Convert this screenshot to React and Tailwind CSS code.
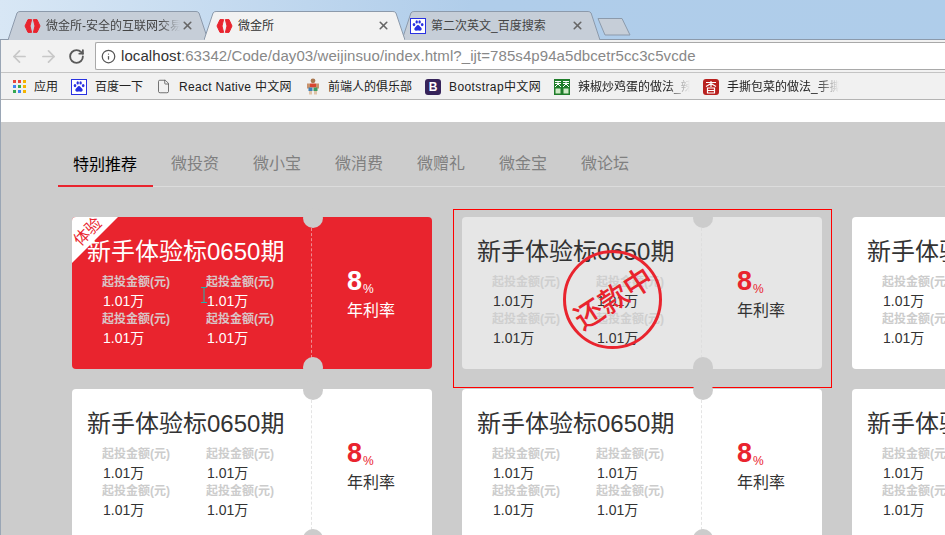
import React from "react";
import { ArrowLeft, ArrowRight, RotateCw, Info, File, X } from "lucide-react";

const FONT = "font-['Liberation_Sans','Noto_Sans_CJK_SC',sans-serif]";

const LogoIcon = () => (
  <svg width="17" height="16" viewBox="0 0 17 16" className="shrink-0">
    <path d="M7.6 1.6 L4 1.6 L1 8 L4 14.4 L7.6 14.4 L6 8 Z" fill="#e9242e" stroke="#e9242e" strokeLinejoin="round" />
    <path d="M9.4 1.6 L13 1.6 L16 8 L13 14.4 L9.4 14.4 L11 8 Z" fill="#e9242e" stroke="#e9242e" strokeLinejoin="round" />
  </svg>
);

const BaiduIcon = () => (
  <svg width="16" height="16" viewBox="0 0 16 16" className="shrink-0">
    <rect x="0.5" y="0.5" width="15" height="15" fill="#fff" stroke="#2932e1" />
    <g fill="#2932e1">
      <ellipse cx="4" cy="6.6" rx="1.3" ry="1.7" />
      <ellipse cx="6.7" cy="3.9" rx="1.2" ry="1.6" />
      <ellipse cx="9.6" cy="3.9" rx="1.2" ry="1.6" />
      <ellipse cx="12.2" cy="6.6" rx="1.3" ry="1.7" />
      <path d="M8 7 C6.6 7 6.2 8.6 5 9.6 C3.6 10.8 4.4 13 6.2 12.7 C7.2 12.5 8.8 12.5 9.8 12.7 C11.6 13 12.4 10.8 11 9.6 C9.8 8.6 9.4 7 8 7 Z" />
    </g>
  </svg>
);

const AppsIcon = () => {
  const colors = ["#e8453c", "#e8453c", "#f4b400", "#3f83f4", "#34a853", "#f4b400", "#34a853", "#3f83f4", "#f4b400"];
  return (
    <div className="grid grid-cols-[3px_3px_3px] gap-[2px] shrink-0">
      {colors.map((c, i) => (
        <svg key={i} width="3" height="3" className="block">
          <rect width="3" height="3" fill={c} />
        </svg>
      ))}
    </div>
  );
};

const PersonIcon = () => (
  <svg width="14" height="17" viewBox="0 0 14 17" className="shrink-0">
    <circle cx="7" cy="2.8" r="2.4" fill="#a9774f" />
    <rect x="4" y="5.5" width="6" height="4" fill="#d8452f" />
    <rect x="1" y="5.5" width="3" height="5" fill="#c9926c" />
    <rect x="10" y="5.5" width="3" height="5" fill="#c9926c" />
    <rect x="2.5" y="9.5" width="4" height="3.5" fill="#3f7fb5" />
    <rect x="7.5" y="9.5" width="4" height="3.5" fill="#3f9a5f" />
    <rect x="3" y="13" width="3" height="3.5" fill="#e0c3a8" />
    <rect x="8" y="13" width="3" height="3.5" fill="#e0c3a8" />
  </svg>
);

const BootstrapIcon = () => (
  <div className="w-4 h-4 rounded-[3px] bg-[#36235a] text-white text-[12px] font-bold leading-4 text-center shrink-0">B</div>
);

const GreenIcon = () => (
  <svg width="16" height="16" viewBox="0 0 16 16" className="shrink-0">
    <rect width="16" height="16" fill="#1f7d2a" />
    <path d="M1 2.5H7M1 4.5H7M4 2.5V5M1 8L4 5L7 8M9 2.5H15M9 4.5H15M12 2.5V5M9 8L12 5L15 8" stroke="#fff" strokeWidth="1" fill="none" />
    <rect x="1.5" y="9.5" width="5" height="5" fill="#cfeac6" />
    <rect x="9.5" y="9.5" width="5" height="5" fill="#cfeac6" />
  </svg>
);

const XiangIcon = () => (
  <svg width="16" height="16" viewBox="0 0 16 16" className="shrink-0">
    <rect width="16" height="16" rx="3" fill="#b8211f" />
    <path d="M3 3.5H13M8 2V8M3 7.5L8 4.5L13 7.5M4.5 9H11.5V14H4.5ZM4.5 11.5H11.5" stroke="#fff" strokeWidth="1.2" fill="none" />
  </svg>
);

const Tab = ({ width, active, icon, title, fade, className, inner }) => (
  <div className={`relative h-[29px] flex items-center ${width} ${active ? "z-10" : ""} ${className || ""}`}>
    <svg className="absolute inset-0 w-full h-full" viewBox="0 0 200 29" preserveAspectRatio="none">
      <path
        d="M0 29 L9 2 Q10 0.5 12 0.5 L188 0.5 Q190 0.5 191 2 L200 29"
        fill={active ? "#f2f2f2" : "#c6ced8"}
        stroke="#8c9aab"
        strokeWidth="1"
        vectorEffect="non-scaling-stroke"
      />
    </svg>
    <div className={`relative flex items-center w-full ${inner}`}>
      {icon}
      <span
        className={`ml-[5px] text-[12px] whitespace-nowrap overflow-hidden w-[134px] ${active ? "text-[#333]" : "text-[#444]"} ${
          fade ? "[mask-image:linear-gradient(to_right,#000_85%,transparent)]" : ""
        }`}
      >
        {title}
      </span>
      <X size={13} strokeWidth={3} className="ml-auto text-[#666] shrink-0" />
    </div>
  </div>
);

const Bookmark = ({ icon, text, width, fade, track }) => (
  <div className="flex items-center gap-[8px] shrink-0">
    {icon}
    <span
      className={`text-[12px] text-[#222] whitespace-nowrap overflow-hidden ${width} ${track || ""} ${
        fade ? "[mask-image:linear-gradient(to_right,#000_80%,transparent)]" : ""
      }`}
    >
      {text}
    </span>
  </div>
);

const Browser = () => (
  <div>
    <div className="h-[40px] bg-gradient-to-r from-[#d8e7f5] via-[#b0cdea] to-[#afcdea] pt-[11px] pl-[8px] flex border-b border-[#8c9aab]">
      <Tab width="w-[200px]" inner="pl-[16px] pr-[14px]" icon={<LogoIcon />} title="微金所-安全的互联网交易平台" fade />
      <Tab width="w-[201px]" inner="pl-[12px] pr-[15px]" active icon={<LogoIcon />} title="微金所" className="-ml-[4px]" />
      <Tab width="w-[198px]" inner="pl-[8px] pr-[16px]" icon={<BaiduIcon />} title="第二次英文_百度搜索" className="-ml-[3px]" />
      <svg width="34" height="18" viewBox="0 0 34 18" className="-ml-[3px] mt-[7px]">
        <path d="M1 0.5 L25 0.5 L33 17 L8 17 Z" fill="#c6ced8" stroke="#8c9aab" />
      </svg>
    </div>
    <div className="border-l border-[#9aa6b5]">
      <div className="h-[32px] bg-[#f2f2f2] flex items-center pl-[9px]">
        <ArrowLeft size={19} strokeWidth={2.2} className="text-[#c8c8c8]" />
        <ArrowRight size={19} strokeWidth={2.2} className="text-[#c8c8c8] ml-[10px]" />
        <RotateCw size={17} strokeWidth={2.6} className="text-[#5a5a5a] ml-[10px]" />
        <div className="ml-[10px] h-[28px] flex-1 bg-white border border-r-0 border-[#a9a9a9] rounded-l-[2px] flex items-center pl-[5px]">
          <Info size={15} strokeWidth={2} className="text-[#555]" />
          <span className="ml-[5px] text-[15px] tracking-[0.08px] whitespace-nowrap text-[#333]">
            localhost<span className="text-[#888]">:63342/Code/day03/weijinsuo/index.html?_ijt=785s4p94a5dbcetr5cc3c5vcde</span>
          </span>
        </div>
      </div>
      <div className="h-[28px] bg-[#f1f1f1] border-t border-[#c4c4c4] border-b border-b-[#b4b4b4] flex items-center pl-[12px] pt-[1px] gap-[13px] overflow-hidden">
        <Bookmark icon={<AppsIcon />} text="应用" width="w-[24px]" />
        <Bookmark icon={<BaiduIcon />} text="百度一下" width="w-[48px]" />
        <Bookmark icon={<File size={15} strokeWidth={1.3} className="text-[#555] shrink-0" />} text="React Native 中文网" width="w-[114px]" track="tracking-[0.3px]" />
        <Bookmark icon={<PersonIcon />} text="前端人的俱乐部" width="w-[84px]" />
        <Bookmark icon={<BootstrapIcon />} text="Bootstrap中文网" width="w-[92px]" track="tracking-[0.4px]" />
        <Bookmark icon={<GreenIcon />} text="辣椒炒鸡蛋的做法_辣椒炒" width="w-[112px]" fade />
        <Bookmark icon={<XiangIcon />} text="手撕包菜的做法_手撕包菜" width="w-[112px]" fade />
      </div>
      <div className="h-[22px] bg-white" />
    </div>
  </div>
);

const navs = ["微投资", "微小宝", "微消费", "微赠礼", "微金宝", "微论坛"];

const Nav = () => (
  <div className="ml-[57px] border-b border-[#dcdcdc] h-[65px] flex items-end gap-[4px]">
    <div className="pl-[15px] pr-[16px] h-[45px] -mb-px -mr-px border-b-2 border-[#e9242e] text-[16px] leading-[46px] text-black">特别推荐</div>
    {navs.map((n) => (
      <div key={n} className="px-[15px] h-[45px] text-[16px] leading-[46px] text-[#808080]">
        {n}
      </div>
    ))}
  </div>
);

const Info2 = ({ variant }) => {
  const label = variant === "red" ? "text-[#d9c4c6]" : variant === "gray" ? "text-[#cfcfcf]" : "text-[#cccccc]";
  const value = variant === "red" ? "text-white" : "text-[#333]";
  return (
    <div>
      <div className={`text-[12px] font-bold leading-[19px] ${label}`}>起投金额(元)</div>
      <div className={`text-[14px] leading-[18px] pl-px ${value}`}>1.01万</div>
    </div>
  );
};

const Card = ({ variant = "white", children }) => {
  const bg = variant === "red" ? "bg-[#e9242e]" : variant === "gray" ? "bg-[#e6e6e6]" : "bg-white";
  const text = variant === "red" ? "text-white" : "text-[#333]";
  const line = variant === "red" ? "border-[#f08a8f]" : variant === "gray" ? "border-[#dedede]" : "border-[#e4e4e4]";
  const accent = variant === "red" ? "text-white" : "text-[#e9242e]";
  return (
    <div className={`relative h-[152px] rounded-[4px] flex ${bg} ${text}`}>
      <div className="w-[239px] pl-[15px] pt-[17px]">
        <div className="text-[24px] leading-[36px] whitespace-nowrap">新手体验标0650期</div>
        <div className="grid grid-cols-[104px_104px] pl-[15px] mt-[3px]">
          <Info2 variant={variant} />
          <Info2 variant={variant} />
          <Info2 variant={variant} />
          <Info2 variant={variant} />
        </div>
      </div>
      <div className={`my-[11px] border-l border-dashed ${line}`} />
      <div className="pl-[35px] pt-[46px]">
        <div className="flex items-baseline h-[36px]">
          <span className={`text-[27px] font-bold leading-[36px] ${accent}`}>8</span>
          <span className={`text-[12px] ml-px translate-y-[3px] ${accent}`}>%</span>
        </div>
        <div className="text-[16px] leading-[22px] mt-[1px]">年利率</div>
      </div>
      <div className="absolute left-[231px] -top-[9px] w-5 h-5 rounded-full bg-[#cccccc]" />
      <div className="absolute left-[231px] -bottom-[8px] w-5 h-5 rounded-full bg-[#cccccc] [clip-path:inset(0_0_8px_0)]" />
      {children}
    </div>
  );
};

const Ribbon = () => (
  <div className="absolute left-0 top-0 w-[46px] h-[46px] bg-white rounded-tl-[4px] [clip-path:polygon(0_0,100%_0,0_100%)]">
    <div className="absolute left-[-2px] top-[6px] w-[36px] text-center -rotate-45 text-[16px] leading-[18px] text-[#e9242e]">体验</div>
  </div>
);

const Stamp = () => (
  <div className="absolute left-[101px] top-[33px] w-[99px] h-[99px] rounded-full border-[3px] border-[#e9242e] flex items-center justify-center">
    <span className="-rotate-[33deg] -translate-y-[3px] text-[29px] font-medium leading-none whitespace-nowrap text-[#e9242e] font-['Noto_Sans_CJK_SC',sans-serif]">
      还款中
    </span>
  </div>
);

export default function App() {
  return (
    <div className={`w-[945px] h-[535px] overflow-hidden bg-[#cccccc] ${FONT}`}>
      <Browser />
      <div className="border-l border-[#9aa6b5] h-full">
        <Nav />
        <div className="grid grid-cols-[360px_360px_360px] gap-x-[30px] gap-y-[20px] pl-[71px] pt-[30px]">
          <Card variant="red">
            <Ribbon />
            <svg width="7" height="16" viewBox="0 0 7 16" className="absolute left-[129px] top-[70px]">
              <path d="M0 0.5H6M0 15.5H6M3 0.5V15.5" stroke="#1fb5ad" fill="none" />
            </svg>
          </Card>
          <div className="relative">
            <Card variant="gray">
              <Stamp />
            </Card>
            <div className="absolute -left-[9px] -right-[10px] -top-[8px] -bottom-[19px] border border-[#ff0000]" />
          </div>
          <Card />
          <Card />
          <Card />
          <Card />
        </div>
      </div>
    </div>
  );
}
